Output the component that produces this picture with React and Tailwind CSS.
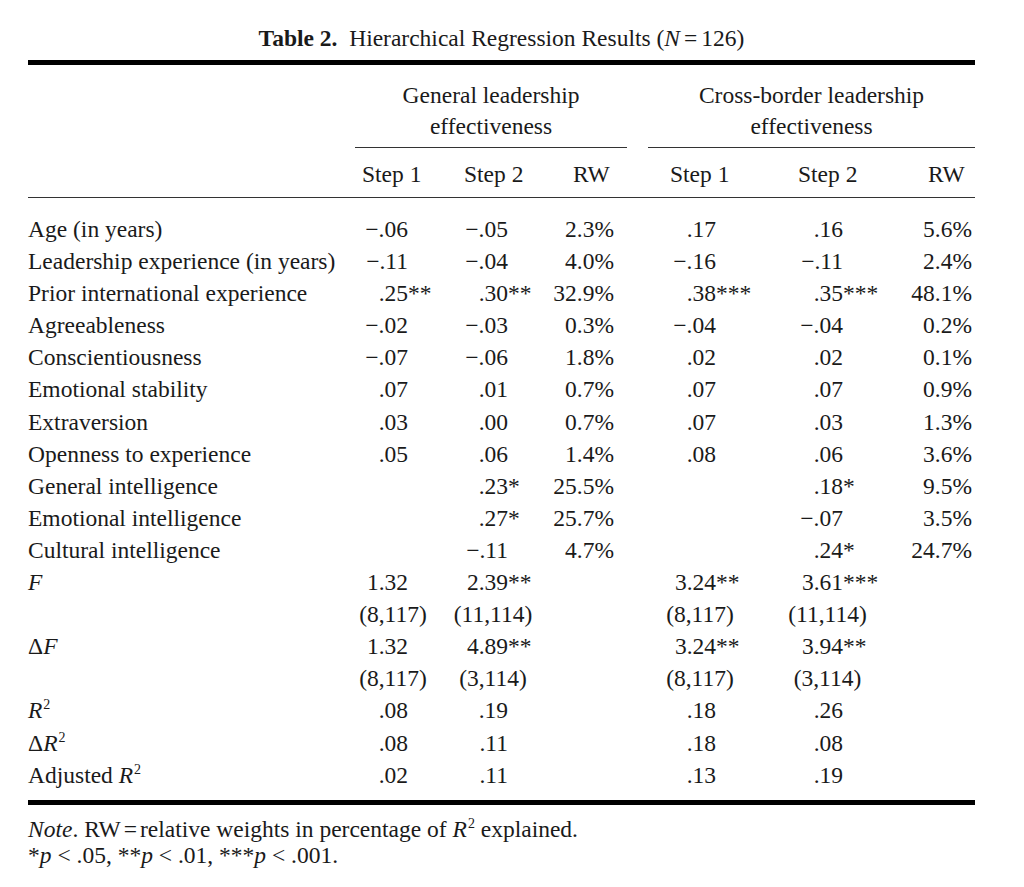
const cols = [
  { num: "w-[53px]", par: "w-[76px]" },
  { num: "w-[65px]", par: "w-[100px]" },
  { num: "w-[69px]" },
  { num: "w-[68px]", par: "w-[104px]" },
  { num: "w-[83px]", par: "w-[135px]" },
  { num: "w-[77px]" },
];

const R2 = ({ pre }) => (
  <>
    {pre}
    <i>R</i>
    <sup className="text-[14px] -top-[9px] ml-px">2</sup>
  </>
);

const rows = [
  ["Age (in years)", "−.06", "−.05", "2.3%", ".17", ".16", "5.6%"],
  ["Leadership experience (in years)", "−.11", "−.04", "4.0%", "−.16", "−.11", "2.4%"],
  ["Prior international experience", ".25**", ".30**", "32.9%", ".38***", ".35***", "48.1%"],
  ["Agreeableness", "−.02", "−.03", "0.3%", "−.04", "−.04", "0.2%"],
  ["Conscientiousness", "−.07", "−.06", "1.8%", ".02", ".02", "0.1%"],
  ["Emotional stability", ".07", ".01", "0.7%", ".07", ".07", "0.9%"],
  ["Extraversion", ".03", ".00", "0.7%", ".07", ".03", "1.3%"],
  ["Openness to experience", ".05", ".06", "1.4%", ".08", ".06", "3.6%"],
  ["General intelligence", "", ".23*", "25.5%", "", ".18*", "9.5%"],
  ["Emotional intelligence", "", ".27*", "25.7%", "", "−.07", "3.5%"],
  ["Cultural intelligence", "", "−.11", "4.7%", "", ".24*", "24.7%"],
  [<i>F</i>, "1.32", "2.39**", "", "3.24**", "3.61***", ""],
  ["", "(8,117)", "(11,114)", "", "(8,117)", "(11,114)", ""],
  [<>Δ<i>F</i></>, "1.32", "4.89**", "", "3.24**", "3.94**", ""],
  ["", "(8,117)", "(3,114)", "", "(8,117)", "(3,114)", ""],
  [<R2 />, ".08", ".19", "", ".18", ".26", ""],
  [<R2 pre="Δ" />, ".08", ".11", "", ".18", ".08", ""],
  [<R2 pre="Adjusted " />, ".02", ".11", "", ".13", ".19", ""],
];

function Cell({ v, c }) {
  if (!v) return <div />;
  if (v.startsWith("(")) {
    return (
      <div>
        <span className={`block text-center ${c.par}`}>{v}</span>
      </div>
    );
  }
  const m = v.match(/^([^*]*)(\**)$/);
  return (
    <div className="flex">
      <span className={`shrink-0 text-right ${c.num}`}>{m[1]}</span>
      <span>{m[2]}</span>
    </div>
  );
}

function Row({ r }) {
  return (
    <div className="grid grid-cols-[327px_88px_102px_82px_21px_112px_135px_80px] whitespace-nowrap">
      <div>{r[0]}</div>
      <Cell v={r[1]} c={cols[0]} />
      <Cell v={r[2]} c={cols[1]} />
      <Cell v={r[3]} c={cols[2]} />
      <div />
      <Cell v={r[4]} c={cols[3]} />
      <Cell v={r[5]} c={cols[4]} />
      <Cell v={r[6]} c={cols[5]} />
    </div>
  );
}

export default function App() {
  return (
    <div className="min-h-[887px] bg-white text-[#1a1a1a] font-['Liberation_Serif','Times_New_Roman',serif] text-[23.5px]">
      <div className="ml-[28px] w-[947px] pt-[23px]">
        <p className="text-center leading-[30px] whitespace-nowrap">
          <b>Table 2.</b>
          {"\u00a0 "}Hierarchical Regression Results (<i>N</i>
          <span className="mx-[4px]">=</span>126)
        </p>

        <div className="mt-[7px] h-[5px] bg-black" />

        {/* column groups */}
        <div className="mt-[15px] grid grid-cols-[327px_272px_21px_327px] leading-[31px]">
          <div />
          <div className="text-center">
            General leadership
            <br />
            effectiveness
          </div>
          <div />
          <div className="text-center">
            Cross-border leadership
            <br />
            effectiveness
          </div>
        </div>
        <div className="mt-[5px] grid grid-cols-[327px_272px_21px_327px]">
          <div />
          <div className="h-px bg-[#333]" />
          <div />
          <div className="h-px bg-[#333]" />
        </div>

        <div className="mt-[10px] grid grid-cols-[327px_88px_102px_82px_21px_112px_135px_80px] leading-[32px] whitespace-nowrap">
          <div />
          <div className="pl-[7px]">Step 1</div>
          <div className="pl-[21px]">Step 2</div>
          <div className="pl-[28px]">RW</div>
          <div />
          <div className="pl-[22px]">Step 1</div>
          <div className="pl-[38px]">Step 2</div>
          <div className="pl-[33px]">RW</div>
        </div>

        <div className="mt-[7px] h-px bg-[#333]" />

        <div className="mt-[15px] leading-[32.1px]">
          {rows.map((r, i) => (
            <Row key={i} r={r} />
          ))}
        </div>

        <div className="mt-[9px] h-[5px] bg-black" />

        <div className="mt-[11px] leading-[26px] whitespace-nowrap">
          <p>
            <i>Note</i>. RW<span className="mx-[3px]">=</span>relative weights in percentage of <R2 /> explained.
          </p>
          <p>
            *<i>p</i> &lt; .05, **<i>p</i> &lt; .01, ***<i>p</i> &lt; .001.
          </p>
        </div>
      </div>
    </div>
  );
}
